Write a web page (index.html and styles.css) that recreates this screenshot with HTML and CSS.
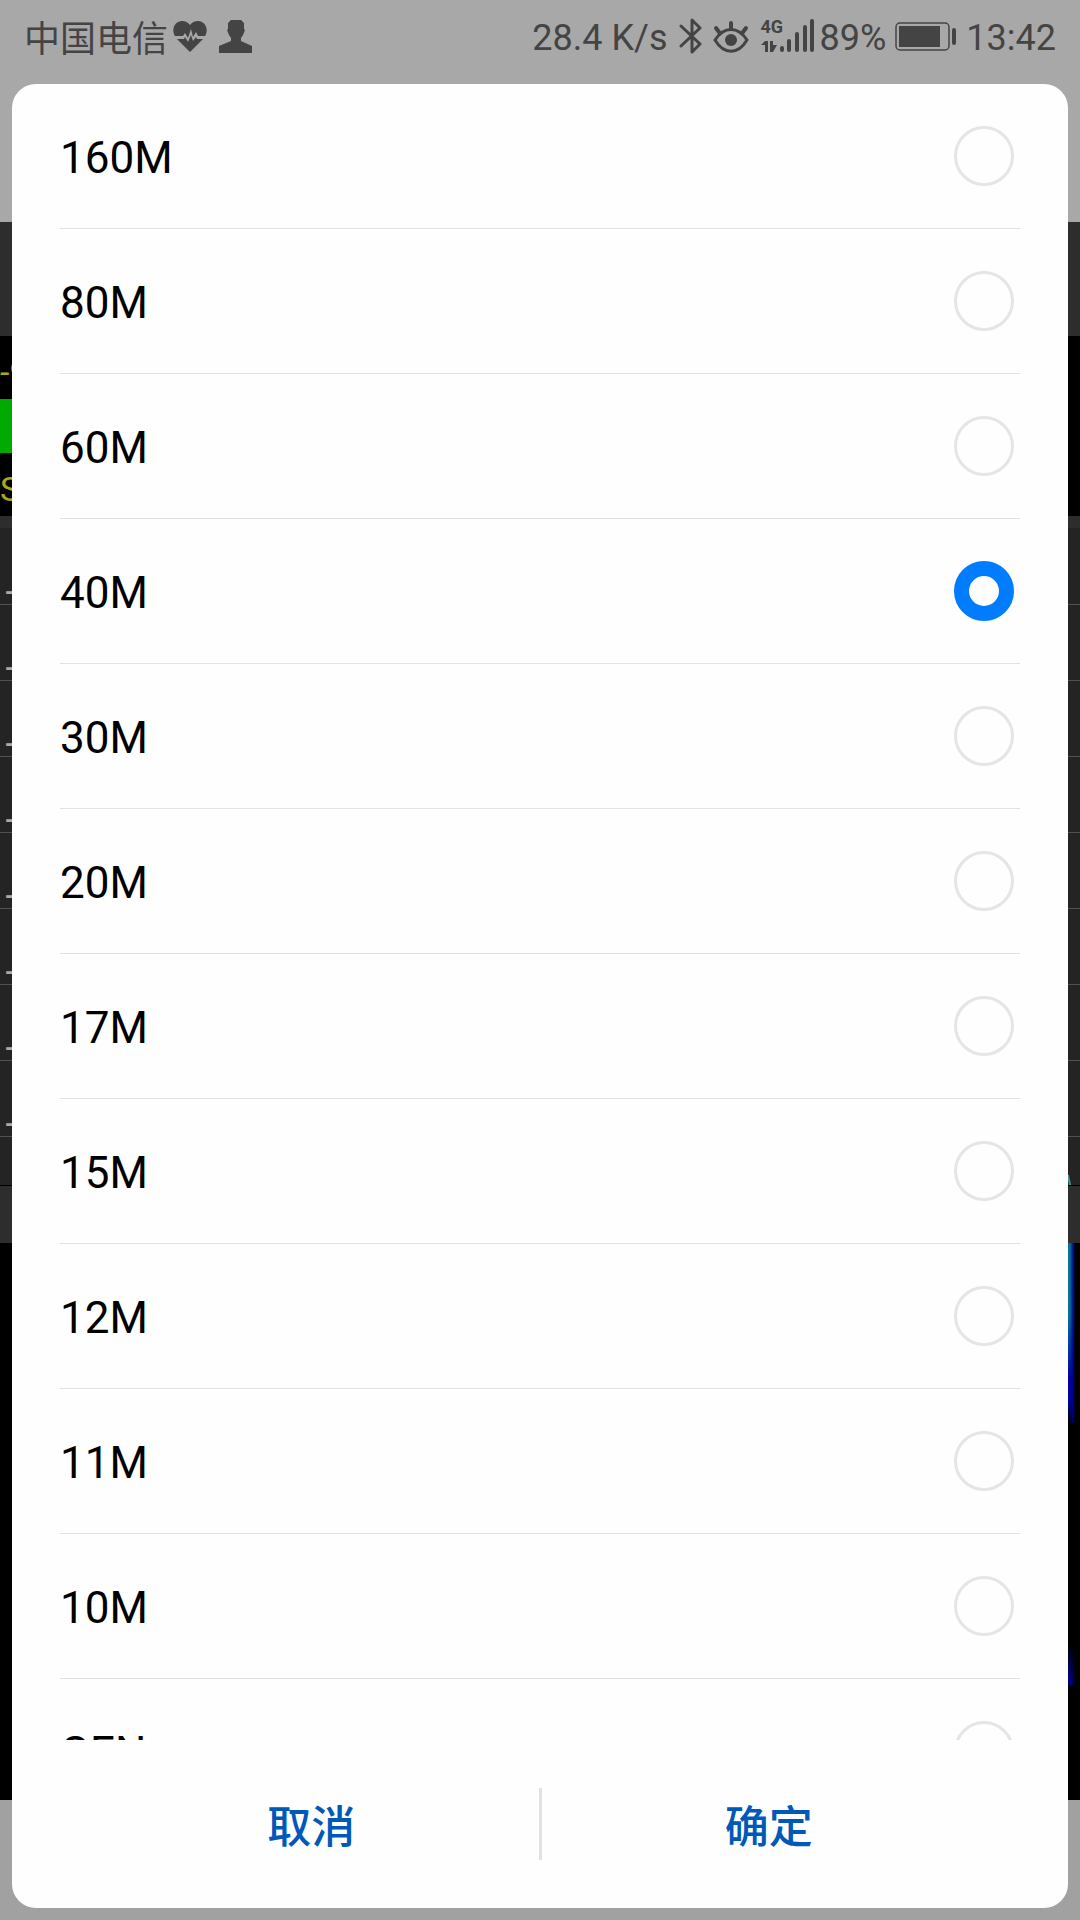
FILE: index.html
```html
<!DOCTYPE html>
<html lang="zh-CN">
<head>
    <meta charset="UTF-8">
    <meta name="viewport" content="width=device-width, initial-scale=1.0">
    <title>Band</title>
    <link rel="stylesheet" href="styles.css">
</head>
<body>
    <div class="screen">
        <header class="status-bar">
            <span class="carrier">中国电信</span>
            <svg class="heart" width="34" height="32" viewBox="0 0 34 32">
                <path fill="#444" d="M17 4C20 0 25-1 29 1C34 4 35 10 32 15H25L23 11L20 16L18 8L15 17L12 12L10 15H2C-1 10 0 4 5 1C9-1 14 0 17 4Z"/>
                <path fill="#444" d="M4 18H11L12 16L15 21L18 14L20 20L23 16L24 18H30L17 31Z"/>
            </svg>
            <svg class="person" width="34" height="34" viewBox="0 0 34 34">
                <path fill="#444" d="M12 1H22L25 4V10L26 11L24 16L22 19V22L33 27V34H0V27L12 22V19L10 16L8 11L9 10V4Z"/>
            </svg>
            <span class="spacer"></span>
            <span>28.4 K/s</span>
            <svg class="bluetooth" width="24" height="36" viewBox="0 0 24 36">
                <path fill="none" stroke="#444" stroke-width="3" stroke-linejoin="round" stroke-linecap="round" d="M2 8L21 26L13 34V2L21 10L2 28"/>
            </svg>
            <svg class="eye" width="36" height="32" viewBox="0 0 36 32">
                <path fill="none" stroke="#444" stroke-width="3" d="M2 19C11 5 25 5 34 19C25 34 11 34 2 19Z"/>
                <circle cx="18" cy="19" r="6" fill="#444"/>
                <path stroke="#444" stroke-width="4" stroke-linecap="round" d="M18 2V8M3 7L6 11M33 7L30 11"/>
            </svg>
            <span class="network">
                <span class="network-type">4G</span>
                <svg width="54" height="34" viewBox="0 0 54 34">
                    <path fill="#444" d="M0 26L4 22H7V33H4V26ZM9 22H12V26H16L12 33H9Z"/>
                    <path stroke="#444" stroke-width="4" stroke-linecap="round" d="M21 29V31M28 22V31M36 15V31M44 8V31M51 2V31"/>
                </svg>
            </span>
            <span>89%</span>
            <svg class="battery" width="62" height="30" viewBox="0 0 62 30">
                <rect x="1" y="1" width="53" height="27" rx="4" fill="none" stroke="#444" stroke-width="1.5"/>
                <rect x="4" y="4" width="41" height="21" fill="#444"/>
                <rect x="57" y="6" width="4" height="17" rx="2" fill="#444"/>
            </svg>
            <span>13:42</span>
        </header>

        <div class="toolbar"></div>
        <div class="display">
            <span class="reading">-9</span>
            <span class="meter"></span>
            <span class="reading">S</span>
        </div>
        <div class="divider"></div>
        <div class="spectrum">
            <div class="grid-row">-</div>
            <div class="grid-row">-</div>
            <div class="grid-row">-</div>
            <div class="grid-row">-</div>
            <div class="grid-row">-</div>
            <div class="grid-row">-</div>
            <div class="grid-row">-</div>
            <div class="grid-row">-</div>
            <svg class="trace" width="14" height="10" viewBox="0 0 14 10">
                <path fill="none" stroke="#409799" stroke-width="2" d="M0 10L2 0L4 10"/>
            </svg>
        </div>
        <div class="scale"></div>
        <div class="waterfall">
            <div class="signal strong"></div>
            <div class="signal weak"></div>
        </div>
        <div class="bottom-bar"></div>
    </div>

    <form class="dialog" role="dialog">
        <div class="options">
            <label class="option">160M <input type="radio" name="band" value="160"></label>
            <label class="option">80M <input type="radio" name="band" value="80"></label>
            <label class="option">60M <input type="radio" name="band" value="60"></label>
            <label class="option">40M <input type="radio" name="band" value="40" checked></label>
            <label class="option">30M <input type="radio" name="band" value="30"></label>
            <label class="option">20M <input type="radio" name="band" value="20"></label>
            <label class="option">17M <input type="radio" name="band" value="17"></label>
            <label class="option">15M <input type="radio" name="band" value="15"></label>
            <label class="option">12M <input type="radio" name="band" value="12"></label>
            <label class="option">11M <input type="radio" name="band" value="11"></label>
            <label class="option">10M <input type="radio" name="band" value="10"></label>
            <label class="option">GEN <input type="radio" name="band" value="gen"></label>
        </div>
        <div class="actions">
            <button type="button">取消</button>
            <span class="separator"></span>
            <button type="button">确定</button>
        </div>
    </form>
</body>
</html>
```
FILE: styles.css
```css
* {
    box-sizing: border-box;
}

body {
    position: relative;
    margin: 0;
    font-family: Roboto, "Noto Sans CJK SC", sans-serif;
}

.screen {
    display: flex;
    flex-direction: column;
    min-height: 100vh;
    background-color: #000;
}

/* status bar */
.status-bar {
    display: flex;
    align-items: flex-start;
    height: 222px;
    padding: 16px 24px 0;
    background-color: #a8a8a8;
    color: #444;
    font-size: 36px;
    line-height: 44px;
    white-space: nowrap;
}

.status-bar svg {
    flex: none;
}

.carrier {
    font-family: "Noto Sans CJK SC", sans-serif;
    line-height: 40px;
}

.spacer {
    flex: 1;
}

.heart {
    margin: 5px 0 0 5px;
}

.person {
    margin: 3px 0 0 12px;
}

.bluetooth {
    margin: 2px 10px 0 11px;
}

.eye {
    margin-top: 5px;
}

.network {
    position: relative;
    height: 34px;
    margin: 3px 5px 0 12px;
}

.network svg {
    display: block;
}

.network-type {
    position: absolute;
    top: 0;
    left: 0;
    font-family: "Liberation Sans Narrow", Roboto, sans-serif;
    font-size: 18px;
    font-weight: bold;
    line-height: 16px;
}

.battery {
    margin: 6px 9px 0;
}

/* radio screen behind the dialog */
.toolbar {
    height: 114px;
    background-color: #2d2d2d;
}

.display {
    display: flex;
    flex-direction: column;
    height: 180px;
}

.reading {
    height: 63px;
    color: #aaa718;
    font-size: 34px;
    line-height: 72px;
}

.meter {
    width: 50%;
    height: 54px;
    background-color: #00aa00;
}

.divider {
    height: 12px;
    background-color: #2d2d2d;
}

.spectrum {
    position: relative;
    height: 658px;
    background-color: #242424;
    border-bottom: 1px solid #000;
}

.grid-row {
    height: 76px;
    padding: 45px 0 0 5px;
    border-bottom: 1px solid #505050;
    color: #aaa;
    font-size: 30px;
    font-weight: 500;
    line-height: 36px;
}

.grid-row:first-child {
    height: 77px;
    padding-top: 46px;
}

.trace {
    position: absolute;
    right: 0;
    bottom: 0;
}

.scale {
    height: 57px;
    background-color: #2d2d2d;
}

.waterfall {
    display: flex;
    flex: 1;
    flex-direction: column;
    align-items: flex-end;
    justify-content: space-between;
    padding-bottom: 115px;
}

.signal {
    width: 12px;
}

.strong {
    height: 180px;
    background: linear-gradient(to right, transparent 15%, #00008acc 40%, #000 60%), linear-gradient(#0a7396, #086f9b 40%, #0004a0 75%, #00009a 88%, #000);
}

.weak {
    height: 43px;
    background: linear-gradient(to right, transparent 30%, #000 60%), linear-gradient(#000, #00008a);
}

.bottom-bar {
    height: 120px;
    background-color: #a1a1a1;
}

/* dialog */
.dialog {
    position: absolute;
    top: 84px;
    right: 12px;
    bottom: 12px;
    left: 12px;
    display: flex;
    flex-direction: column;
    background-color: #fefefe;
    border-radius: 24px;
}

.options {
    flex: 1;
    min-height: 0;
    padding: 0 48px;
    overflow-y: auto;
    scrollbar-width: none;
}

.option {
    display: flex;
    align-items: center;
    justify-content: space-between;
    height: 145px;
    padding: 4px 6px 0 0;
    border-bottom: 1px solid #e2e2e2;
    color: #000;
    font-size: 44px;
    cursor: pointer;
}

.option input {
    appearance: none;
    width: 60px;
    height: 60px;
    margin: 0 0 4px;
    border: 3px solid #e5e5e5;
    border-radius: 50%;
}

.option input:checked {
    border: 15px solid #007dff;
}

.actions {
    display: flex;
    align-items: center;
    height: 168px;
    padding: 0 72px;
}

.actions button {
    flex: 1;
    height: 108px;
    padding: 0;
    border: none;
    background: none;
    color: #0059b8;
    font-family: "Noto Sans CJK SC", sans-serif;
    font-size: 44px;
    font-weight: 500;
    cursor: pointer;
}

.separator {
    width: 3px;
    height: 72px;
    background-color: #e2e2e2;
}
```
